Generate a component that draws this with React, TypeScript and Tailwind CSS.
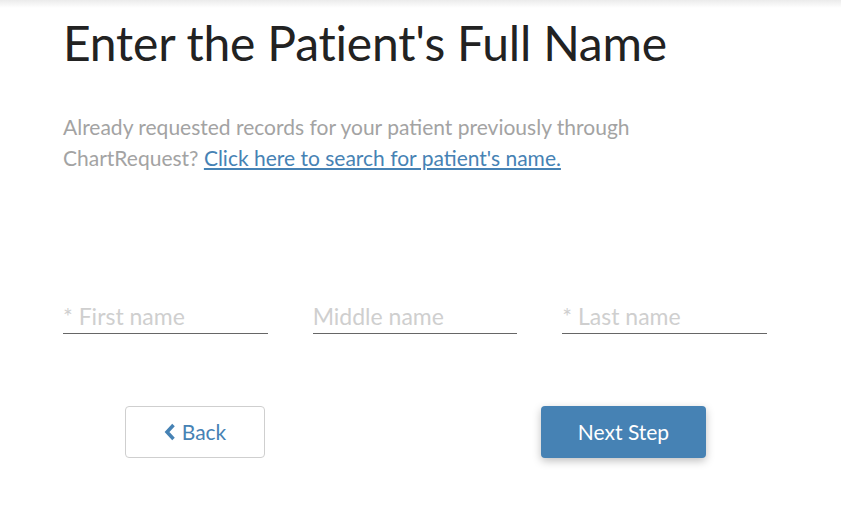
export default function App() {
  return (
    <div
      className="relative min-h-screen w-full bg-white"
      style={{ fontFamily: "Lato, 'Open Sans', sans-serif" }}
    >
      <div className="absolute inset-x-0 top-0 h-[8px] bg-gradient-to-b from-[#ebebeb] to-white" />
      <main className="w-[704px] pl-[63px] box-content pt-[15px]">
        <h1 className="text-[48px] leading-[56px] font-normal text-[#222] tracking-[-0.2px]">
          Enter the Patient's Full Name
        </h1>

        <p className="mt-[40px] w-[610px] text-[21px] leading-[31px] text-[#a3a3a3]">
          Already requested records for your patient previously through ChartRequest?{" "}
          <a href="#" className="text-[#4682b4] underline underline-offset-2">
            Click here to search for patient's name.
          </a>
        </p>

        <div className="mt-[125px] grid grid-cols-3 gap-[45px]">
          <input
            placeholder="* First name"
            className="h-[36px] border-b border-[#666] text-[23px] text-[#333] placeholder:text-[#cfcfcf] outline-none"
          />
          <input
            placeholder="Middle name"
            className="h-[36px] border-b border-[#666] text-[23px] text-[#333] placeholder:text-[#cfcfcf] outline-none"
          />
          <input
            placeholder="* Last name"
            className="h-[36px] border-b border-[#666] text-[23px] text-[#333] placeholder:text-[#cfcfcf] outline-none"
          />
        </div>

        <div className="mt-[72px] flex justify-between pl-[62px] pr-[61px]">
          <button className="flex h-[52px] w-[140px] items-center justify-center gap-[6px] rounded-[4px] border border-[#cfcfcf] bg-white text-[21px] text-[#4682b4]">
            <svg width="12" height="18" viewBox="0 0 12 18" fill="none">
              <path d="M9.5 2 L3 9 L9.5 16" stroke="#4682b4" strokeWidth="3.5" strokeLinejoin="miter" />
            </svg>
            Back
          </button>
          <button className="h-[52px] w-[165px] rounded-[4px] bg-[#4682b4] text-[21px] text-white shadow-[0_3px_8px_rgba(0,0,0,0.25)]">
            Next Step
          </button>
        </div>
      </main>
    </div>
  );
}
